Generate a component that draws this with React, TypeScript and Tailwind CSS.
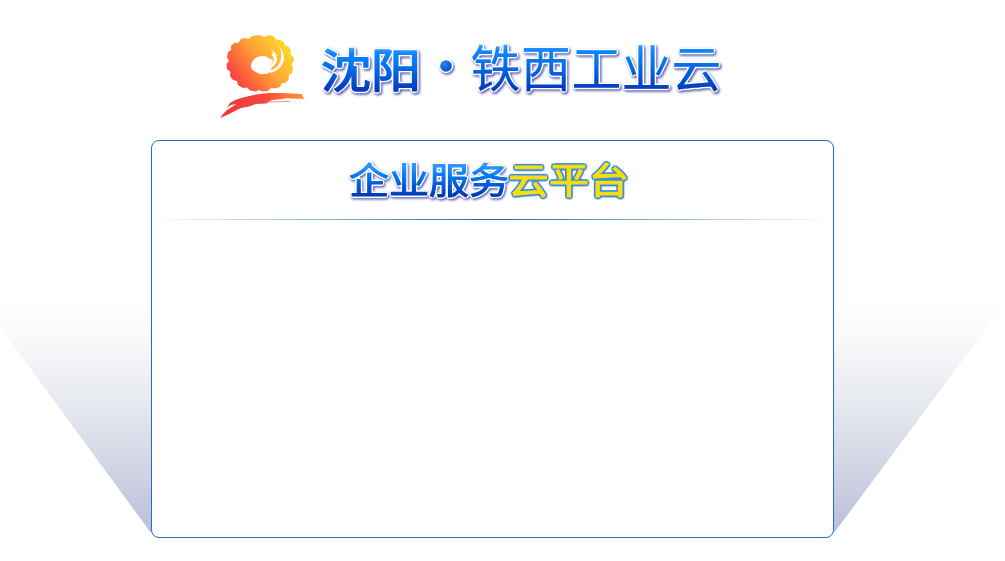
const cjk = '"Noto Sans CJK SC", sans-serif';

function Emblem() {
  return (
    <svg className="h-[90px] w-[90px] shrink-0" viewBox="218 32 90 90" aria-hidden="true">
      <defs>
        <linearGradient id="sun" gradientUnits="userSpaceOnUse" x1="289" y1="44" x2="238" y2="82">
          <stop offset="0" stopColor="#fbdc28" />
          <stop offset="0.5" stopColor="#ffa136" />
          <stop offset="1" stopColor="#fd4540" />
        </linearGradient>
        <linearGradient id="wave" x1="0" y1="0" x2="1" y2="0">
          <stop offset="0" stopColor="#e43a38" />
          <stop offset="0.5" stopColor="#fb4440" />
          <stop offset="1" stopColor="#ff9a30" />
        </linearGradient>
      </defs>
      <path
        fill="url(#sun)"
        d="M256 35.5 L260 35 L264 37 L269 35 L274 36.5 L276 39.5 L280 40 L284 42 L284.500 45 L289 47 L291 51 L290 54 L293.500 57 L294 61 L291.500 64 L293 68 L292 73 L289 75 L288.500 80 L285 83 L282 83 L280 87 L275 88.500 L271 88 L268 91 L263 91.500 L259 90 L256 91.500 L250 90.500 L247 87.500 L243 88 L238 85 L237 81 L233 80 L230 76 L230.500 72 L227 69 L226.500 64 L229 61 L227 57 L228 52 L231 50 L231 46 L234 43 L238 43 L241 39 L245 38 L249 39 L252 36 Z"
      />
      <g fill="#fff">
        <path d="M251 66 C251 60 256 56 263 56 C267 56 269 58 271 60 L272 58 C273 60 273 63 271 65 L273 66 C272 68 270 69 271 71 C269 74 265 74 262 74 C259 75 257 72 254 71 C252 70 251 68 251 66 Z" />
        <path d="M275 42 C280 46 284 52 284 58 C284 65 278 71 271 73 L270 70 C276 69 281 64 281 57 C282 51 280 46 275 42 Z" />
        <path d="M270 49 C275 51 279 57 276 63 L273 67 L271 65 C275 61 275 57 271 55 C274 54 273 51 270 49 Z" />
      </g>
      <path
        fill="url(#wave)"
        d="M220 118 L223 114 L227 110 L232 107 L236 104 L231 105 L227 107.500 L230 103 L235 100 L243 97.500 L256 94.500 L268 93 L282 93 L302 94 L303 97 L305 99 L291 98.500 L287 98 L283 99 L272 100 L269 102 L266 103.500 L256 104 L249 106.500 L241 108 L234 111.500 L227 115 Z"
      />
      <path stroke="#f57060" strokeWidth="0.8" fill="none" d="M270 102 L290 101.500" />
    </svg>
  );
}

function BrandTitle() {
  return (
    <svg className="mt-[-6px] h-[84px] w-[412px] shrink-0 overflow-visible" viewBox="316 26 412 84" role="img" fontFamily={cjk}>
      <defs>
        <linearGradient id="brand" gradientUnits="userSpaceOnUse" x1="0" y1="45" x2="0" y2="92">
          <stop offset="0" stopColor="#389cff" />
          <stop offset="0.12" stopColor="#0d86fd" />
          <stop offset="0.4" stopColor="#0671ed" />
          <stop offset="1" stopColor="#0036b8" />
        </linearGradient>
        <radialGradient id="dot" cx="0.35" cy="0.3" r="0.8">
          <stop offset="0" stopColor="#2a83f3" />
          <stop offset="1" stopColor="#004cc6" />
        </radialGradient>
        <filter id="brandRim" x="-5%" y="-10%" width="110%" height="130%" colorInterpolationFilters="sRGB">
          <feGaussianBlur in="SourceAlpha" stdDeviation="1" result="spread" />
          <feComponentTransfer in="spread" result="fat">
            <feFuncA type="linear" slope="7" intercept="-0.2" />
          </feComponentTransfer>
          <feFlood floodColor="#fff" />
          <feComposite in2="fat" operator="in" result="rim" />
          <feMerge result="glyph">
            <feMergeNode in="rim" />
            <feMergeNode in="SourceGraphic" />
          </feMerge>
          <feDropShadow in="glyph" dx="1.2" dy="1.5" stdDeviation="1.1" floodColor="#1c1c90" floodOpacity="0.75" />
        </filter>
      </defs>
      <g filter="url(#brandRim)" fill="url(#brand)" stroke="url(#brand)" strokeLinejoin="round">
        <text transform="translate(0 7.4) scale(1 0.92)" x="321 371" y="86.500" fontSize="50" fontWeight="400" strokeWidth="1.6">沈阳</text>
        <text x="470.500 521 571.500 621.500 671.500" y="86.500" fontSize="50" fontWeight="400" strokeWidth="0.2">铁西工业云</text>
        <circle cx="446" cy="66" r="5.800" fill="url(#dot)" stroke="none" />
      </g>
    </svg>
  );
}

function PlatformTitle() {
  return (
    <svg className="h-[64px] w-[294px] overflow-visible" viewBox="343 147 294 64" role="img" fontFamily={cjk} fontSize="40">
      <defs>
        <linearGradient id="service" gradientUnits="userSpaceOnUse" x1="0" y1="164" x2="0" y2="198">
          <stop offset="0" stopColor="#2a97ff" />
          <stop offset="0.3" stopColor="#087df5" />
          <stop offset="1" stopColor="#0034b4" />
        </linearGradient>
        <filter id="serviceRim" x="-5%" y="-10%" width="110%" height="130%" colorInterpolationFilters="sRGB">
          <feGaussianBlur in="SourceAlpha" stdDeviation="0.9" result="spread" />
          <feComponentTransfer in="spread" result="fat">
            <feFuncA type="linear" slope="7" intercept="-0.2" />
          </feComponentTransfer>
          <feFlood floodColor="#fff" />
          <feComposite in2="fat" operator="in" result="rim" />
          <feMerge result="glyph">
            <feMergeNode in="rim" />
            <feMergeNode in="SourceGraphic" />
          </feMerge>
          <feDropShadow in="glyph" dx="1" dy="1.5" stdDeviation="1.1" floodColor="#1c1c90" floodOpacity="0.75" />
        </filter>
        <filter id="cloudRim" x="-5%" y="-10%" width="110%" height="130%" colorInterpolationFilters="sRGB">
          <feGaussianBlur in="SourceAlpha" stdDeviation="1" result="spread" />
          <feComponentTransfer in="spread" result="fat">
            <feFuncA type="linear" slope="7" intercept="-0.2" />
          </feComponentTransfer>
          <feFlood floodColor="#2f8fee" />
          <feComposite in2="fat" operator="in" result="rim" />
          <feMerge result="glyph">
            <feMergeNode in="rim" />
            <feMergeNode in="SourceGraphic" />
          </feMerge>
          <feDropShadow in="glyph" dx="0.3" dy="0.5" stdDeviation="0.6" floodColor="#305080" floodOpacity="0.5" />
        </filter>
      </defs>
      <g strokeLinejoin="round" fontWeight="400">
        <text transform="translate(0 16.300) scale(1 0.91)" x="349 389 429 469" y="195.500" fill="url(#service)" stroke="url(#service)" strokeWidth="1.1" filter="url(#serviceRim)">企业服务</text>
        <text transform="translate(0 16.300) scale(1 0.91)" x="508.500 549 589" y="195.500" fill="#ffdc08" stroke="#ffdc08" strokeWidth="1.300" filter="url(#cloudRim)">云平台</text>
      </g>
    </svg>
  );
}

export default function App() {
  return (
    <main className="flex h-[561px] w-[1005px] flex-col overflow-hidden bg-white">
      <header className="flex h-[140px] shrink-0 items-start gap-2 pt-8 pl-[218px]">
        <Emblem />
        <BrandTitle />
      </header>
      <div className="flex h-[398px] shrink-0 items-end">
        <div className="mb-[5px] h-[233px] w-[151px] bg-[linear-gradient(#fff,#f7f8fa_18%,#e5e8ee_46%,#d5d8e6_68%,#bbbfd8)] [clip-path:polygon(0_0,100%_0,100%_100%,0_27px)]" />
        <section className="flex h-[398px] w-[683px] flex-col rounded-lg border border-[#1f6bcf] bg-white">
          <h1 className="flex h-[78px] justify-center pt-[6px] pr-[5px]">
            <PlatformTitle />
          </h1>
          <div className="h-px bg-linear-to-r from-transparent via-[#176d9d] to-transparent" />
        </section>
        <div className="mb-[5px] h-[233px] w-[171px] bg-[linear-gradient(#fff,#f7f8fa_18%,#e5e8ee_46%,#d5d8e6_68%,#bbbfd8)] [clip-path:polygon(0_0,100%_0,100%_3px,0_100%)]" />
      </div>
    </main>
  );
}
